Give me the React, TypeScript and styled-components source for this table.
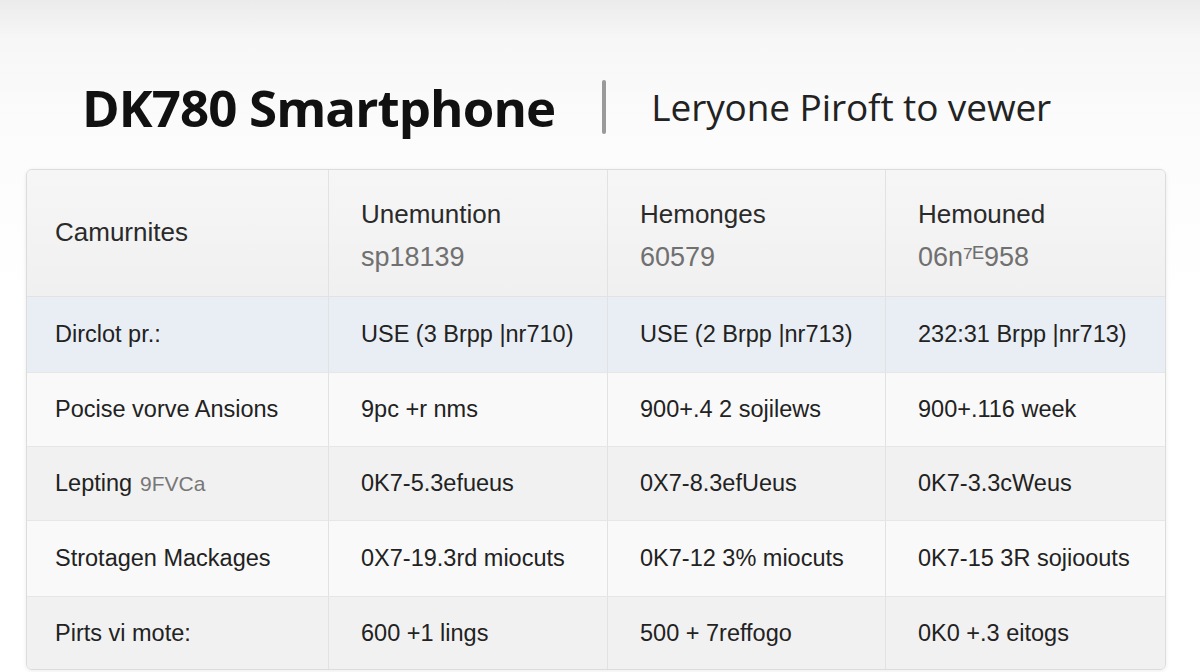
import React, { FC } from "react";
import styled, { createGlobalStyle } from "styled-components";

const GlobalStyle = createGlobalStyle`
  html, body {
    margin: 0;
    padding: 0;
  }
  body {
    font-family: "Liberation Sans", Arial, sans-serif;
    background: #fff;
  }
`;

interface HeadCol {
  title: string;
  code?: string;
}

const columns: HeadCol[] = [
  { title: "Camurnites" },
  { title: "Unemuntion", code: "sp18139" },
  { title: "Hemonges", code: "60579" },
  { title: "Hemouned", code: "06n⁷ᴱ958" },
];

interface Row {
  label: string;
  note?: string;
  values: string[];
  height: number;
  tone: string;
}

const rows: Row[] = [
  {
    label: "Dirclot pr.:",
    values: ["USE (3 Brpp |nr710)", "USE (2 Brpp |nr713)", "232:31 Brpp |nr713)"],
    height: 76,
    tone: "#e9eef4",
  },
  {
    label: "Pocise vorve Ansions",
    values: ["9pc +r nms", "900+.4 2 sojilews", "900+.116 week"],
    height: 74,
    tone: "#f9f9f9",
  },
  {
    label: "Lepting",
    note: "9FVCa",
    values: ["0K7-5.3efueus", "0X7-8.3efUeus", "0K7-3.3cWeus"],
    height: 74,
    tone: "#f1f1f1",
  },
  {
    label: "Strotagen Mackages",
    values: ["0X7-19.3rd miocuts", "0K7-12 3% miocuts", "0K7-15 3R sojioouts"],
    height: 76,
    tone: "#f9f9f9",
  },
  {
    label: "Pirts vi mote:",
    values: ["600 +1 lings", "500 + 7reffogo", "0K0 +.3 eitogs"],
    height: 72,
    tone: "#f1f1f1",
  },
];

const App: FC = function () {
  return (
    <Page>
      <GlobalStyle />
      <Header>
        <Title>DK780 Smartphone</Title>
        <Divider />
        <Subtitle>Leryone Piroft to vewer</Subtitle>
      </Header>
      <Card>
        <HeadRow>
          {columns.map((c, i) => (
            <HeadCell key={i}>
              <HeadTitle>{c.title}</HeadTitle>
              {c.code && <HeadCode>{c.code}</HeadCode>}
            </HeadCell>
          ))}
        </HeadRow>
        {rows.map((r, i) => (
          <BodyRow
            key={i}
            $tone={r.tone}
            $height={r.height}
            $last={i === rows.length - 1}
          >
            <Cell>
              {r.label}
              {r.note && <Note>{r.note}</Note>}
            </Cell>
            {r.values.map((v, j) => (
              <Cell key={j}>{v}</Cell>
            ))}
          </BodyRow>
        ))}
      </Card>
    </Page>
  );
};

export default App;

const Page = styled.div`
  width: 1200px;
  height: 672px;
  overflow: hidden;
  box-sizing: border-box;
  padding: 0 34px 0 26px;
  background: linear-gradient(to bottom, #ebebeb 0px, #f7f7f7 40px, #fbfbfb 120px, #ffffff 300px);
`;

const Header = styled.div`
  display: flex;
  align-items: center;
  height: 169px;
  box-sizing: border-box;
  padding: 44px 0 0 56px;
`;

const Title = styled.h1`
  margin: 0;
  font-family: "Open Sans", sans-serif;
  font-weight: 700;
  font-size: 51px;
  letter-spacing: -0.9px;
  color: #111;
`;

const Divider = styled.div`
  width: 4px;
  height: 54px;
  border-radius: 2px;
  background: #9a9a9a;
  margin: 0 45px 0 47px;
`;

const Subtitle = styled.div`
  font-family: "Open Sans", sans-serif;
  font-weight: 400;
  font-size: 37px;
  letter-spacing: -0.1px;
  color: #222;
`;

const Card = styled.div`
  border: 1px solid #dcdcdc;
  border-radius: 6px;
  overflow: hidden;
  box-shadow: 0 1px 4px rgba(0, 0, 0, 0.08);
  background: #f8f8f8;
`;

const gridCols = "302px 279px 278px 1fr";

const HeadRow = styled.div`
  display: grid;
  grid-template-columns: ${gridCols};
  height: 126px;
  background: linear-gradient(to bottom, #f6f6f6, #f0f0f0);
  border-bottom: 1px solid #e2e2e2;
`;

const HeadCell = styled.div`
  display: flex;
  flex-direction: column;
  justify-content: center;
  padding: 6px 0 0 32px;
  border-right: 1px solid #e2e2e2;

  &:first-child {
    padding: 0 0 2px 28px;
  }
  &:last-child {
    border-right: none;
  }
`;

const HeadTitle = styled.div`
  font-size: 26px;
  color: #2a2a2a;
  line-height: 42px;
`;

const HeadCode = styled.div`
  font-size: 27px;
  color: #707070;
  line-height: 44px;
`;

const BodyRow = styled.div<{ $tone: string; $height: number; $last: boolean }>`
  display: grid;
  grid-template-columns: ${gridCols};
  height: ${(p) => p.$height}px;
  box-sizing: border-box;
  background: ${(p) => p.$tone};
  border-bottom: ${(p) => (p.$last ? "none" : "1px solid #e6e6e6")};
`;

const Cell = styled.div`
  display: flex;
  align-items: center;
  padding-left: 32px;
  font-size: 23.5px;
  color: #222;
  white-space: nowrap;
  border-right: 1px solid #e2e2e2;

  &:first-child {
    padding-left: 28px;
  }
  &:last-child {
    border-right: none;
  }
`;

const Note = styled.span`
  margin-left: 8px;
  color: #777;
  font-size: 21px;
`;
